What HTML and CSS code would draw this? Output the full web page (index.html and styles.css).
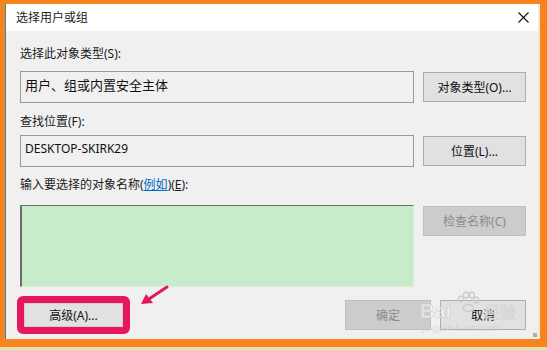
FILE: index.html
```html
<!DOCTYPE html>
<html lang="zh-CN">
<head>
  <meta charset="UTF-8">
  <title>选择用户或组</title>
  <link rel="stylesheet" href="styles.css">
</head>
<body>

  <div class="frame">
    <!-- 对话框 -->
    <div class="dialog">
      <div class="titlebar">
        <span class="title">选择用户或组</span>
        <svg class="close" width="11" height="11" viewBox="0 0 11 11">
          <path d="M0.5 0.5 L10.5 10.5 M10.5 0.5 L0.5 10.5" stroke="#111" stroke-width="1.1" fill="none"/>
        </svg>
      </div>

      <div class="content">
        <div class="label lbl-type">选择此对象类型(S):</div>
        <div class="row">
          <div class="field">用户、组或内置安全主体</div>
          <button class="btn">对象类型(O)...</button>
        </div>

        <div class="label lbl-loc">查找位置(F):</div>
        <div class="row">
          <div class="field field-latin">DESKTOP-SKIRK29</div>
          <button class="btn">位置(L)...</button>
        </div>

        <div class="label lbl-name">输入要选择的对象名称(<a href="#" class="link">例如</a>)(<u>E</u>):</div>
        <div class="row row-top">
          <div class="names"></div>
          <button class="btn btn-off btn-check">检查名称(C)</button>
        </div>

        <div class="footer">
          <div class="mark">
            <button class="btn btn-adv">高级(A)...</button>
          </div>
          <div class="actions">
            <button class="btn btn-off btn-sm">确定</button>
            <button class="btn btn-sm">取消</button>
          </div>
        </div>
      </div>

      <div class="grip"></div>
    </div>

    <!-- 箭头 -->
    <svg class="arrow" width="40" height="30" viewBox="0 0 40 30">
      <path d="M32 3 L14 15" stroke="#e2185b" stroke-width="3" stroke-linecap="round" fill="none"/>
      <path d="M6 20 L11 10 L18 19 Z" fill="#e2185b"/>
    </svg>

    <!-- 水印 -->
    <div class="watermark">
      <span class="wm-bai">Bai</span>
      <svg class="wm-paw" width="24" height="22" viewBox="0 0 24 22">
        <g fill="none" stroke="#cdcdcd" stroke-width="1.5">
          <ellipse cx="5" cy="8" rx="2.5" ry="3"/>
          <ellipse cx="10" cy="4" rx="2.5" ry="3"/>
          <ellipse cx="16" cy="4" rx="2.5" ry="3"/>
          <ellipse cx="20" cy="9" rx="2.5" ry="3"/>
          <path d="M7 18 C7 12 17 12 18 18 C16 21 9 21 7 18 Z"/>
        </g>
      </svg>
      <span class="wm-jy">经验</span>
      <span class="wm-url">jingyan.baidu.com</span>
    </div>
  </div>
  <div class="strip"></div>

</body>
</html>
```

FILE: styles.css
```css
* { box-sizing: border-box; margin: 0; padding: 0; }
body {
  background: #f7841e;
  font-family: "Noto Sans", "Noto Sans CJK SC", sans-serif;
  font-size: 12px;
  color: #111;
}
.frame {
  position: relative;
  height: 347px;
  padding: 4px 7px 0 5px;
  background: #f7841e;
}
.strip {
  height: 3px;
  background: #e2e3a8;
}
.dialog {
  position: relative;
  height: 335px;
  background: #f0f0f0;
  border-left: 1px solid #3e8a9a;
  border-right: 2px solid #f6e7d3;
}
.titlebar {
  height: 27px;
  background: #fff;
  display: flex;
  align-items: center;
  justify-content: space-between;
  padding: 0 9px 1px 10px;
}
.title { font-size: 12px; color: #222; }
.content {
  padding: 15px 12px 0 14px;
}
.label {
  line-height: 16px;
  color: #1a1a1a;
}
.lbl-type { margin-bottom: 9px; }
.lbl-loc { margin: 11px 0 5px; }
.lbl-name { margin: 10px 0 12px; }
.link { color: #0066cc; text-decoration: underline; }
.row {
  display: flex;
  align-items: center;
  gap: 9px;
}
.row-top { align-items: flex-start; }
.field {
  width: 394px;
  height: 32px;
  border: 1px solid #9a9a9a;
  background: #f0f0f0;
  padding: 5px 0 0 4px;
  font-size: 13px;
  line-height: 16px;
}
.field-latin { font-size: 12px; }
.names {
  width: 394px;
  height: 82px;
  background: #c7ecca;
  border: 1px solid #d8ecd8;
  border-top: 1px solid #6e6e6e;
  border-left: 2px solid #6e6e6e;
}
.btn {
  width: 103px;
  height: 30px;
  background: #e1e1e1;
  border: 1px solid #adadad;
  font-family: "Noto Sans", "Noto Sans CJK SC", sans-serif;
  font-size: 12px;
  color: #111;
}
.btn-off {
  background: #cccccc;
  border-color: #bfbfbf;
  color: #8a8a8a;
}
.btn-check { margin-top: 1px; }
.footer {
  display: flex;
  justify-content: space-between;
  align-items: center;
  margin-top: 9px;
}
.mark {
  margin-left: -3px;
  width: 113px;
  height: 38px;
  border: 7px solid #e8175d;
  border-radius: 6px;
  display: flex;
}
.btn-adv {
  width: 100%;
  height: 100%;
  border-color: #cfcfcf;
}
.actions {
  display: flex;
  gap: 9px;
}
.btn-sm { width: 86px; }
.grip {
  position: absolute;
  right: 1px;
  bottom: 2px;
  width: 4px;
  height: 4px;
  background: radial-gradient(circle, #b0b0b0 0.8px, transparent 1px) 0 0 / 2px 2px;
}
.arrow {
  position: absolute;
  left: 135px;
  top: 284px;
}
.watermark {
  position: absolute;
  left: 420px;
  top: 290px;
  width: 100px;
  height: 46px;
  white-space: nowrap;
  color: rgba(255, 255, 255, 0.5);
  -webkit-text-stroke: 0.6px #cfcfcf;
}
.wm-bai {
  position: absolute;
  left: 0;
  top: 9px;
  font-family: "Liberation Sans", sans-serif;
  font-weight: bold;
  font-size: 20px;
  line-height: 24px;
}
.wm-paw {
  position: absolute;
  left: 36px;
  top: 1px;
}
.wm-jy {
  position: absolute;
  left: 64px;
  top: 11px;
  font-family: "Noto Sans CJK SC", sans-serif;
  font-size: 16px;
  line-height: 20px;
}
.wm-url {
  position: absolute;
  left: 2px;
  top: 32px;
  font-size: 9px;
  line-height: 11px;
  -webkit-text-stroke: 0;
  color: rgba(200, 200, 200, 0.6);
}
```
